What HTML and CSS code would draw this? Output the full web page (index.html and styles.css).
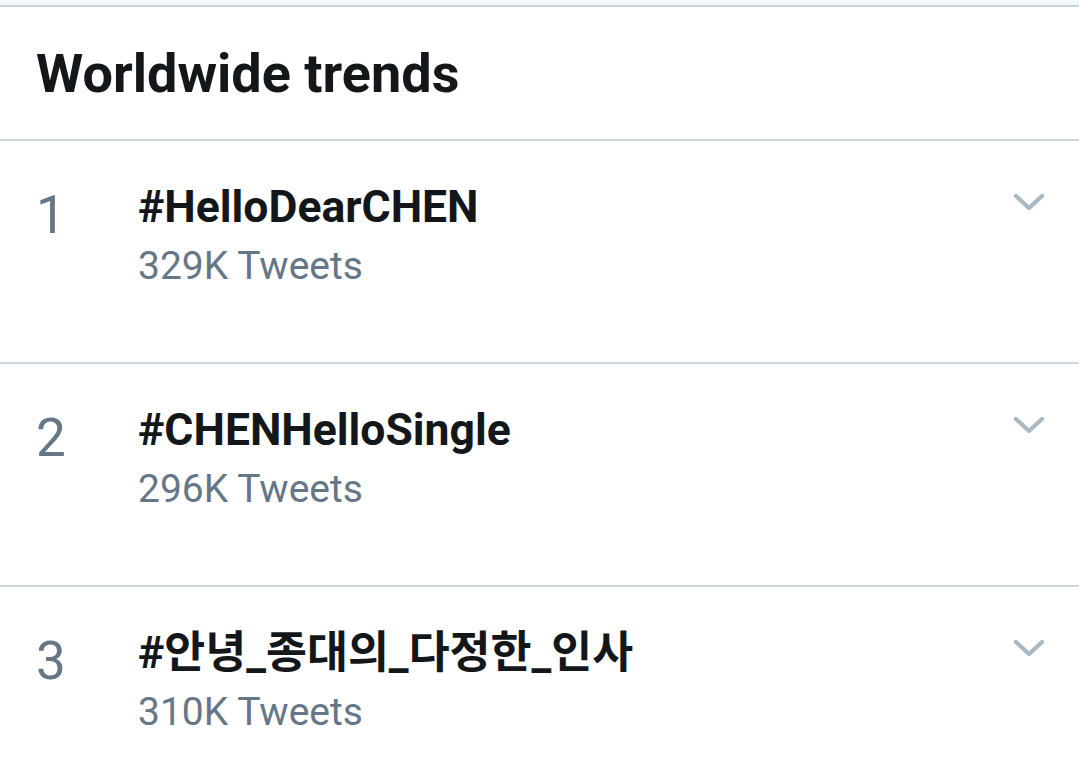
FILE: index.html
```html
<!DOCTYPE html>
<html lang="en">
<head>
<meta charset="utf-8">
<title>Worldwide trends</title>
<link rel="stylesheet" href="styles.css">
</head>
<body>
<div class="topband"></div>
<section class="panel">
  <header class="panel-header">
    <h1 class="panel-title">Worldwide trends</h1>
  </header>
  <ul class="trends">
    <li class="trend">
      <div class="rank">1</div>
      <div class="trend-body">
        <div class="trend-name">#HelloDearCHEN</div>
        <div class="trend-count">329K Tweets</div>
      </div>
      <svg class="chev" viewBox="0 0 32 18" width="32" height="18"><path d="M3 3 L16 15 L29 3" fill="none" stroke="#aab8c2" stroke-width="4.2" stroke-linecap="round" stroke-linejoin="round"/></svg>
    </li>
    <li class="trend">
      <div class="rank">2</div>
      <div class="trend-body">
        <div class="trend-name">#CHENHelloSingle</div>
        <div class="trend-count">296K Tweets</div>
      </div>
      <svg class="chev" viewBox="0 0 32 18" width="32" height="18"><path d="M3 3 L16 15 L29 3" fill="none" stroke="#aab8c2" stroke-width="4.2" stroke-linecap="round" stroke-linejoin="round"/></svg>
    </li>
    <li class="trend">
      <div class="rank">3</div>
      <div class="trend-body">
        <div class="trend-name">#안녕_종대의_다정한_인사</div>
        <div class="trend-count">310K Tweets</div>
      </div>
      <svg class="chev" viewBox="0 0 32 18" width="32" height="18"><path d="M3 3 L16 15 L29 3" fill="none" stroke="#aab8c2" stroke-width="4.2" stroke-linecap="round" stroke-linejoin="round"/></svg>
    </li>
  </ul>
</section>
</body>
</html>
```
FILE: styles.css
```css
* { box-sizing: border-box; }
html, body {
  margin: 0;
  padding: 0;
  background: #ffffff;
  font-family: Roboto, "Noto Sans CJK KR", sans-serif;
  overflow: hidden;
}
.topband {
  height: 7px;
  background: #f5f8fa;
  border-bottom: 2px solid #ccd6dd;
}
.panel-header {
  height: 134px;
  border-bottom: 2px solid #ccd6dd;
  display: flex;
  align-items: center;
  padding-left: 36px;
}
.panel-title {
  margin: 0;
  font-size: 54px;
  font-weight: 700;
  color: #14171a;
}
.trends {
  list-style: none;
  margin: 0;
  padding: 0;
}
.trend {
  height: 223px;
  border-bottom: 2px solid #ccd6dd;
  display: flex;
  align-items: flex-start;
  padding: 37px 34px 0 36px;
}
.rank {
  width: 102px;
  font-size: 53px;
  line-height: 60px;
  color: #657786;
  padding-top: 7px;
}
.trend-body {
  flex: 1;
}
.trend-name {
  font-size: 44.5px;
  font-weight: 700;
  line-height: 58px;
  color: #14171a;
}
.trend-count {
  font-size: 39px;
  line-height: 60px;
  color: #657786;
}
.chev {
  margin-top: 15px;
}
```
